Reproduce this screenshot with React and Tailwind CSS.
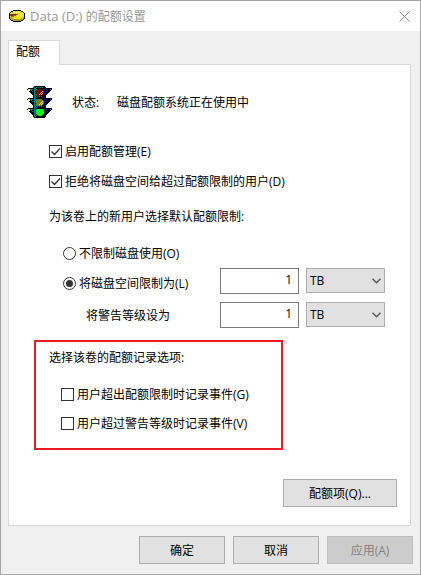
import { useState } from "react"

// Yellow disk with a used-space wedge, shown in the title bar
function QuotaIcon() {
  return (
    <svg className="h-3 w-4 shrink-0" viewBox="0 0 16 12" shapeRendering="crispEdges" aria-hidden="true">
      <path d="M4 0h8v1h2v1h1v1h1v6h-1v1h-1v1h-2v1H4v-1H2v-1H1V9H0V3h1V2h1V1h2z" fill="#000" />
      <path d="M4 1h8v1h2v1h1v4h-1v1h-2v1H4V8H2V7H1V3h1V2h2z" fill="#e6e01c" />
      <path d="M1 7h1v1h2v1h8V8h2V7h1v2h-1v1h-2v1H4v-1H2V9H1z" fill="#a8a210" />
      <path d="M1 4h8v1H7v1H5v1H2V6H1z" fill="#9c5a10" />
      <path d="M2 4h5v1H4v1H2z" fill="#7a2a10" />
      <path d="M5 2h1v1H5zM7 2h1v1H7zM9 2h1v1H9zM11 3h1v1h-1zM10 4h1v1h-1zM12 4h1v1h-1zM9 5h1v1H9zM11 5h1v1h-1zM8 6h1v1H8zM12 6h1v1h-1z" fill="#fffb80" />
    </svg>
  )
}

function TrafficLight() {
  return (
    <svg className="h-8 w-[26px] shrink-0" viewBox="0 0 26 32" shapeRendering="crispEdges" role="img" aria-label="绿灯">
      <defs>
        <pattern id="teal-dither" width="2" height="2" patternUnits="userSpaceOnUse">
          <path d="M0 0h1v1H0zM1 1h1v1H1z" fill="#008080" />
        </pattern>
        <pattern id="navy-dither" width="2" height="2" patternUnits="userSpaceOnUse">
          <path d="M0 0h1v1H0zM1 1h1v1H1z" fill="#000080" />
        </pattern>
      </defs>
      {/* Hoods on both sides of each lamp */}
      {[2, 12, 22].map((y) => (
        <g key={y} transform={`translate(0 ${y})`}>
          <path d="M0 0h7v7H5V6H4V5H3V4H2V2H0z" fill="#000" />
          <path d="M3 1h3v1H3zM4 2h1v1H4zM5 3h1v1H5z" fill="#008080" />
          <path d="M0 0h1v1H0zM1 1h2v1H1zM2 2h1v1H2z" fill="#f0e880" />
          <path d="M18 0h7v2h-1v1h-1v1h-1v1h-1v1h-1v1h-2z" fill="#000" />
          <path d="M19 1h3v1h-3zM19 3h2v1h-2z" fill="#000080" />
          <path d="M23 1h1v1h-1z" fill="#008080" />
        </g>
      ))}
      {/* Housing */}
      <path d="M7 0h11v1h1v30h-1v1H7v-1H6V1h1z" fill="#000" />
      <path d="M7 1h1v30H7z" fill="#008080" />
      <path d="M8 1h2v30H8zM10 1h7v1h-7zM10 10h7v1h-7zM10 20h7v1h-7z" fill="url(#teal-dither)" />
      <path d="M17 1h1v30h-1zM16 10h1v2h-1zM16 20h1v2h-1z" fill="url(#navy-dither)" />
      {/* Lamps */}
      <path d="M10 3h5v1h1v1h1v3h-1v1h-1v1h-5V9H9V4h1z" fill="#800000" />
      <path d="M10 13h5v1h1v1h1v3h-1v1h-1v1h-5v-1H9v-5h1z" fill="#808000" />
      <path d="M10 23h6v1h1v4h-1v1h-1v1h-4v-1h-1v-1H9v-4h1z" fill="#00ff00" />
      <path d="M15 5h1v1h-1zM14 6h1v1h-1zM13 7h1v1h-1zM12 8h1v1h-1zM15 7h1v1h-1zM14 8h1v1h-1z" fill="#d8c0c0" />
      <path d="M15 15h1v1h-1zM14 16h1v1h-1zM13 17h1v1h-1zM12 18h1v1h-1zM15 17h1v1h-1zM14 18h1v1h-1z" fill="#dcdcc0" />
    </svg>
  )
}

function CheckOption({ label, defaultChecked = false }) {
  return (
    <label className="flex h-[19px] items-center gap-[3px]">
      <span className="grid size-[13px] shrink-0">
        <input
          type="checkbox"
          defaultChecked={defaultChecked}
          className="peer col-start-1 row-start-1 size-[13px] appearance-none border border-[#333] bg-white"
        />
        <svg
          className="pointer-events-none invisible col-start-1 row-start-1 size-[13px] peer-checked:visible"
          viewBox="0 0 13 13"
          fill="none"
          stroke="#333"
          strokeWidth="1.3"
          aria-hidden="true"
        >
          <path d="M2.5 6.5l3 3 5.5-6" />
        </svg>
      </span>
      {label}
    </label>
  )
}

function RadioOption({ label, value, selected, onSelect }) {
  return (
    <label className="flex h-[19px] items-center gap-[3px]">
      <input
        type="radio"
        name="limit"
        value={value}
        checked={selected === value}
        onChange={() => onSelect(value)}
        className="grid size-[13px] shrink-0 appearance-none place-items-center rounded-full border border-[#333] bg-white checked:before:size-[7px] checked:before:rounded-full checked:before:bg-[#333]"
      />
      {label}
    </label>
  )
}

// Amount box plus its unit drop-down
function SizeField({ name }) {
  return (
    <div className="flex shrink-0 gap-[7px]">
      <input
        type="text"
        defaultValue="1"
        aria-label={name}
        className="h-[26px] w-[79px] border border-[#7a7a7a] bg-white pr-1.5 pb-1 text-right"
      />
      <div className="grid">
        <select
          defaultValue="TB"
          aria-label={`${name} 单位`}
          className="col-start-1 row-start-1 h-[25px] w-[79px] appearance-none border border-[#adadad] bg-[#e1e1e1] pl-[3px]"
        >
          <option>KB</option>
          <option>MB</option>
          <option>GB</option>
          <option>TB</option>
        </select>
        <svg
          className="pointer-events-none col-start-1 row-start-1 mt-2.5 mr-1 h-1.5 w-[9px] justify-self-end"
          viewBox="0 0 9 6"
          fill="none"
          stroke="#555"
          strokeWidth="1.3"
          aria-hidden="true"
        >
          <path d="M.5 .8l4 4 4-4" />
        </svg>
      </div>
    </div>
  )
}

function Button({ children, wide = false, disabled = false }) {
  return (
    <button
      type="button"
      disabled={disabled}
      className={`h-7 border border-[#adadad] bg-[#e1e1e1] disabled:border-[#bfbfbf] disabled:bg-[#ccc] disabled:text-[#838383] ${
        wide ? "w-[114px]" : "w-[86px]"
      }`}
    >
      {children}
    </button>
  )
}

export default function App() {
  const [limit, setLimit] = useState("limited")

  return (
    <div className="flex min-h-screen flex-col border border-[#a6a6a6] bg-[#f0f0f0] font-['Open_Sans','Noto_Sans_CJK_SC',sans-serif] text-[12px] leading-[19px] text-black">
      <header className="flex h-[30px] items-center bg-white pr-2.5 pl-2 text-[#999]">
        <QuotaIcon />
        <h1 className="ml-[5px] flex-1">
          <span className="text-[13px]">Data (D:) </span>的配额设置
        </h1>
        <button type="button" aria-label="关闭">
          <svg className="size-[11px]" viewBox="0 0 11 11" stroke="#8a8a8a" aria-hidden="true">
            <path d="M.5 .5l10 10M10.5 .5l-10 10" />
          </svg>
        </button>
      </header>

      <main className="flex flex-1 flex-col pt-[9px] pr-[9px] pl-[7px]">
        <div role="tablist" className="z-10 -mb-px flex">
          <button
            type="button"
            role="tab"
            aria-selected="true"
            className="h-[25px] w-[52px] border border-b-0 border-[#d9d9d9] bg-white pb-1 pl-[7px] text-left whitespace-nowrap"
          >
            配额
          </button>
        </div>

        <section role="tabpanel" className="flex flex-1 flex-col border border-[#d9d9d9] bg-white pt-[21px] pr-[13px] pb-[18px] pl-[25px]">
          <div className="-ml-[7px] flex items-center">
            <TrafficLight />
            <span className="ml-[19px] w-[45px]">状态:</span>
            <span>磁盘配额系统正在使用中</span>
          </div>

          <div className="mt-6 flex flex-col gap-[11px] pl-[15px]">
            <CheckOption label="启用配额管理(E)" defaultChecked />
            <CheckOption label="拒绝将磁盘空间给超过配额限制的用户(D)" defaultChecked />
          </div>

          <p className="mt-4 pl-[15px]">为该卷上的新用户选择默认配额限制:</p>

          <div className="mt-[18px] pr-3 pl-[29px]">
            <RadioOption label="不限制磁盘使用(O)" value="none" selected={limit} onSelect={setLimit} />
            <div className="mt-[5px] flex items-end justify-between">
              <div className="pb-px">
                <RadioOption label="将磁盘空间限制为(L)" value="limited" selected={limit} onSelect={setLimit} />
              </div>
              <SizeField name="将磁盘空间限制为" />
            </div>
            <div className="mt-2 flex items-center justify-between pl-[23px]">
              <span>将警告等级设为</span>
              <SizeField name="将警告等级设为" />
            </div>
          </div>

          {/* Highlighted logging options */}
          <div className="mt-3 w-[249px] border-2 border-[#ed1c24] pt-1.5 pb-[15px] pl-[13px]">
            <p>选择该卷的配额记录选项:</p>
            <div className="mt-[18px] flex flex-col gap-2.5 pl-3">
              <CheckOption label="用户超出配额限制时记录事件(G)" />
              <CheckOption label="用户超过警告等级时记录事件(V)" />
            </div>
          </div>

          <div className="mt-auto flex justify-end pt-4">
            <Button wide>配额项(Q)...</Button>
          </div>
        </section>
      </main>

      <footer className="flex justify-end gap-2 py-2.5 pr-[7px]">
        <Button>确定</Button>
        <Button>取消</Button>
        <Button disabled>应用(A)</Button>
      </footer>
    </div>
  )
}
